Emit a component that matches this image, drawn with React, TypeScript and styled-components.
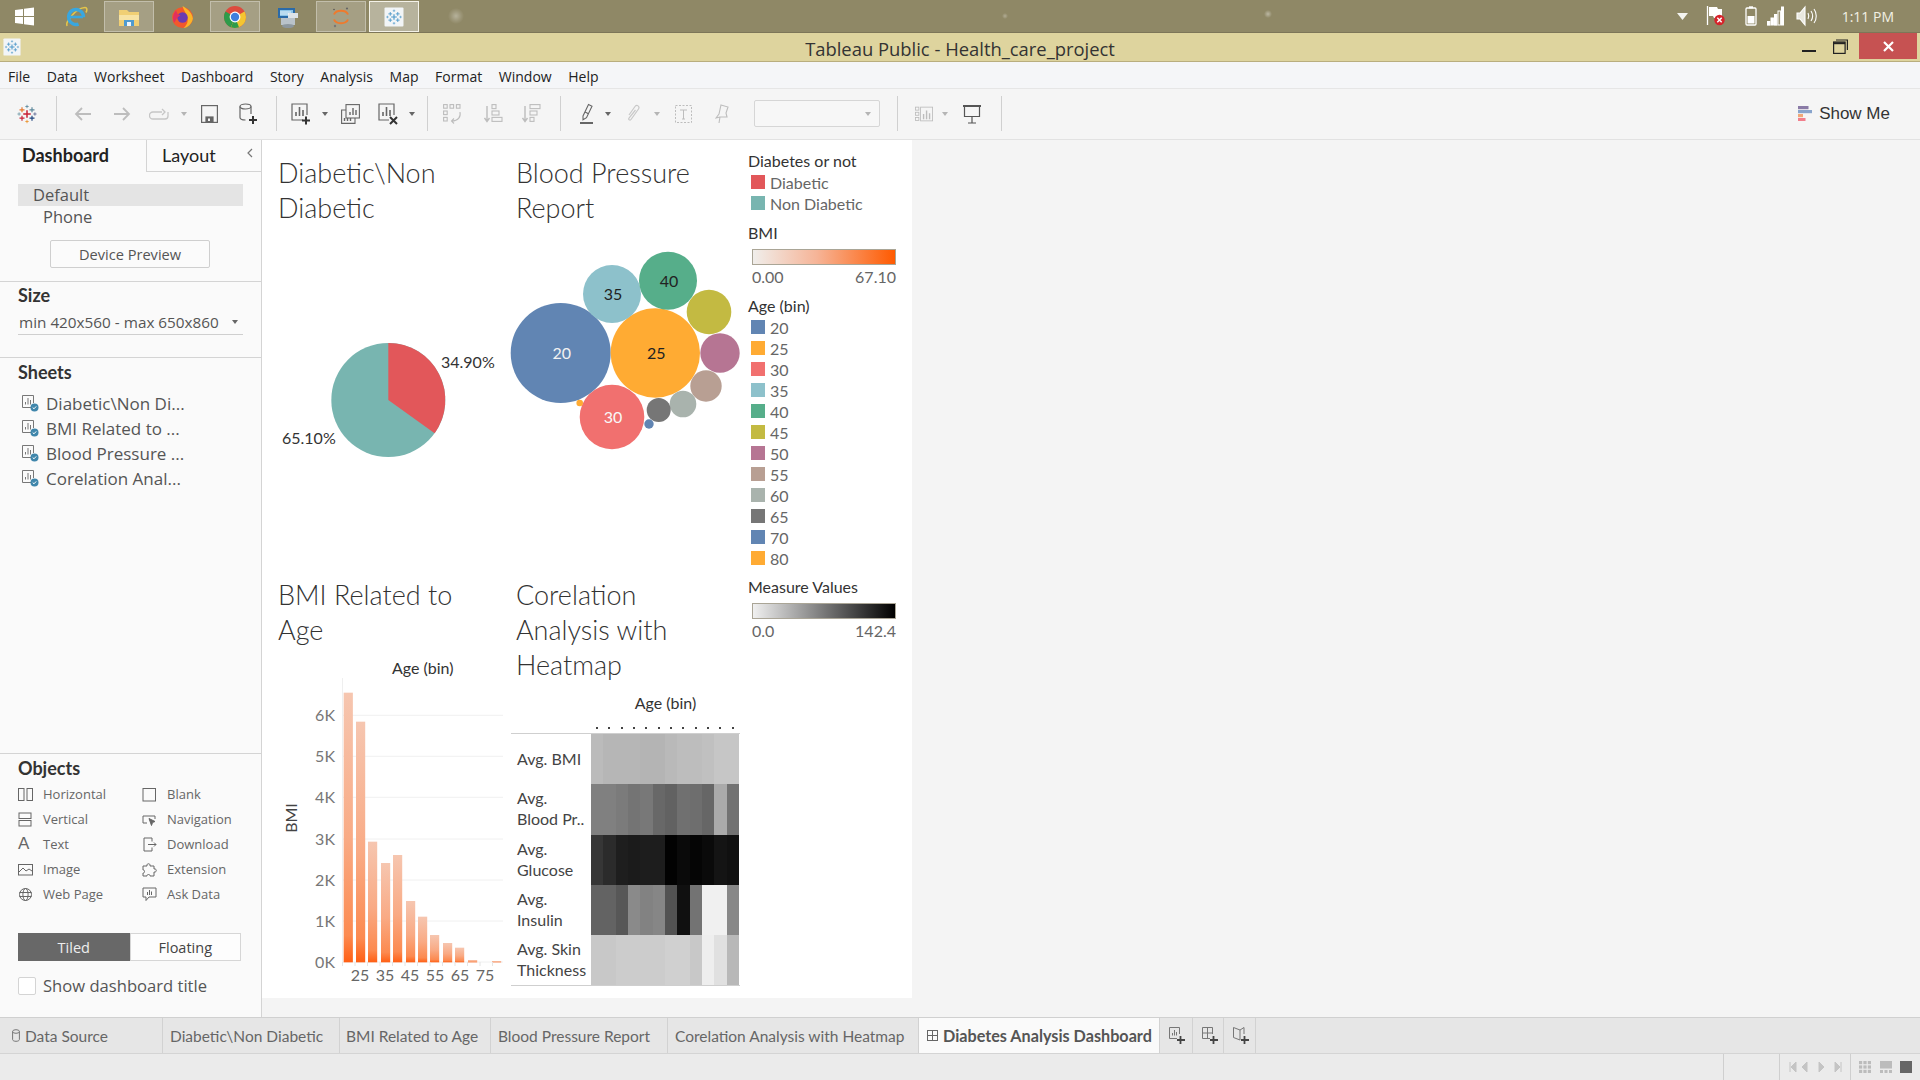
import React from 'react'
import styled, { createGlobalStyle } from 'styled-components'

const UI = `"Open Sans", "Noto Sans", sans-serif`
const BOOK = `Lato, "Open Sans", sans-serif`

const GlobalStyle = createGlobalStyle`
  html, body { margin: 0; padding: 0; background: #f4f4f4; }
  #root { width: 1920px; height: 1080px; }
  * { box-sizing: border-box; }
`

const Page = styled.div`
  width: 1920px;
  height: 1080px;
  display: flex;
  flex-direction: column;
  overflow: hidden;
  font-family: ${UI};
  background: #f4f4f4;
`

/* ---------- taskbar ---------- */

const Taskbar = styled.div`
  height: 33px;
  flex: none;
  display: flex;
  align-items: stretch;
  gap: 3px;
  background:
    radial-gradient(circle at 456px 16px, rgba(255,255,255,.35) 0, rgba(255,255,255,.12) 5px, transparent 8px),
    radial-gradient(circle at 1005px 16px, rgba(255,255,255,.3) 0, transparent 3px),
    radial-gradient(circle at 1268px 14px, rgba(255,255,255,.4) 0, transparent 4px),
    #8f8866;
  border-bottom: 1px solid #7d7658;
`

const TaskSlot = styled.div<{ $state?: 'open' | 'focus'; $w?: number }>`
  width: ${p => p.$w || 50}px;
  display: flex;
  align-items: center;
  justify-content: center;
  margin-top: 1px;
  border: 1px solid ${p => (p.$state === 'focus' ? '#f4f2e8' : p.$state === 'open' ? 'rgba(255,255,255,.32)' : 'transparent')};
  background: ${p => (p.$state === 'focus' ? 'rgba(255,255,255,.36)' : p.$state === 'open' ? 'rgba(255,255,255,.2)' : 'transparent')};
`

const Tray = styled.div`
  margin-left: auto;
  display: flex;
  align-items: center;
  padding-right: 26px;
`

const TraySlot = styled.div<{ $w: number }>`
  width: ${p => p.$w}px;
  display: flex;
  justify-content: center;
`

const Clock = styled.div`
  margin-left: 17px;
  font-size: 14px;
  color: #f2f0e4;
  white-space: nowrap;
`

/* ---------- title bar ---------- */

const TitleBar = styled.div`
  height: 29px;
  flex: none;
  position: relative;
  display: flex;
  align-items: center;
  justify-content: center;
  padding-top: 3px;
  background: #ded49e;
  border-bottom: 1px solid #b9ae7e;
  font-size: 18.4px;
  color: #333;
`

const AppIcon = styled.div`
  position: absolute;
  left: 3px;
  top: 5px;
  line-height: 0;
`

const WinControls = styled.div`
  position: absolute;
  right: 3px;
  top: 0;
  height: 26px;
  display: flex;
`

const WinBtn = styled.div<{ $w: number; $close?: boolean }>`
  width: ${p => p.$w}px;
  display: flex;
  align-items: center;
  justify-content: center;
  background: ${p => (p.$close ? '#c65252' : 'transparent')};
`

/* ---------- menu + toolbar ---------- */

const MenuBar = styled.div`
  height: 27px;
  flex: none;
  display: flex;
  align-items: center;
  gap: 16.6px;
  padding: 2px 0 0 8px;
  background: #f5f6f8;
  border-bottom: 1px solid #e6e6e6;
  font-size: 14px;
  color: #222;
`

const Toolbar = styled.div`
  height: 51px;
  flex: none;
  display: flex;
  align-items: center;
  padding: 0 0 1px 6px;
  background: #f5f5f5;
  border-bottom: 1px solid #e2e2e2;
`

const ToolSlot = styled.div<{ $w: number }>`
  width: ${p => p.$w}px;
  flex: none;
  display: flex;
  align-items: center;
  justify-content: center;
`

const ToolSep = styled.div`
  width: 1px;
  height: 35px;
  background: #d0d0d0;
`

const Caret = styled.div<{ $light?: boolean }>`
  width: 0;
  height: 0;
  border-left: 3.5px solid transparent;
  border-right: 3.5px solid transparent;
  border-top: 4px solid ${p => (p.$light ? '#b5b5b5' : '#666')};
`

const DisabledSelect = styled.div`
  width: 126px;
  height: 27px;
  margin-left: 14px;
  flex: none;
  display: flex;
  align-items: center;
  justify-content: flex-end;
  padding-right: 8px;
  border: 1px solid #d6d6d6;
  border-radius: 2px;
  background: #f7f7f7;
`

const ShowMe = styled.div`
  margin-left: auto;
  margin-right: 30px;
  display: flex;
  align-items: center;
  gap: 7px;
  font-family: "Liberation Sans", sans-serif;
  font-size: 17px;
  color: #333;
`

/* ---------- workspace ---------- */

const Workspace = styled.div`
  flex: 1;
  min-height: 0;
  display: flex;
`

const Side = styled.div`
  width: 262px;
  flex: none;
  display: flex;
  flex-direction: column;
  background: #fafafa;
  border-right: 1px solid #d4d4d4;
  color: #444;
`

const SideTabs = styled.div`
  height: 32px;
  flex: none;
  display: flex;
`

const SideTab = styled.div<{ $active?: boolean }>`
  width: ${p => (p.$active ? 146 : 115)}px;
  padding-left: ${p => (p.$active ? 22 : 15)}px;
  padding-bottom: 2px;
  position: relative;
  display: flex;
  align-items: center;
  font-family: ${BOOK};
  font-size: 18px;
  font-weight: ${p => (p.$active ? 700 : 400)};
  color: #222;
  border-left: ${p => (p.$active ? 'none' : '1px solid #d4d4d4')};
  border-bottom: ${p => (p.$active ? 'none' : '1px solid #d4d4d4')};
`

const Collapse = styled.span`
  position: absolute;
  right: 7px;
  top: 7px;
  line-height: 0;
`

const Section = styled.div<{ $h: number; $top: number }>`
  height: ${p => p.$h}px;
  flex: none;
  padding: ${p => p.$top}px 18px 0;
  border-bottom: 1px solid #d4d4d4;
`

const DeviceRow = styled.div<{ $selected?: boolean; $indent: number }>`
  height: 22px;
  display: flex;
  align-items: center;
  padding-left: ${p => p.$indent}px;
  padding-bottom: 2px;
  background: ${p => (p.$selected ? '#e4e4e4' : 'transparent')};
  font-size: 16.5px;
  color: #555;
`

const Btn = styled.div`
  width: 160px;
  height: 28px;
  margin: 12px 0 0 32px;
  display: flex;
  align-items: center;
  justify-content: center;
  background: #fbfbfb;
  border: 1px solid #cfcfcf;
  border-radius: 2px;
  font-size: 14.6px;
  color: #555;
`

const SideHeading = styled.div`
  height: 22px;
  display: flex;
  align-items: center;
  font-family: ${BOOK};
  font-size: 18px;
  font-weight: 700;
  color: #333;
`

const SizeSelect = styled.div`
  height: 24px;
  margin-top: 5px;
  display: flex;
  align-items: center;
  justify-content: space-between;
  padding: 0 5px 2px 1px;
  border-bottom: 1px solid #cfcfcf;
  font-size: 15.3px;
  color: #555;
  white-space: nowrap;
`

const SheetList = styled.div`
  flex: 1;
  padding-left: 22px;
  border-bottom: 1px solid #d4d4d4;
  display: flex;
  flex-direction: column;
`

const SheetsHeading = styled(SideHeading)`
  margin: 3px 0 8px -4px;
`

const SheetRow = styled.div`
  height: 25px;
  display: flex;
  align-items: center;
  gap: 7px;
  font-size: 17px;
  color: #555;
  white-space: nowrap;
`

const ObjectsPanel = styled.div`
  height: 263px;
  flex: none;
  padding: 3px 0 0 18px;
`

const ObjectGrid = styled.div`
  display: grid;
  grid-template-columns: 124px 1fr;
  grid-auto-rows: 25px;
  margin-top: 2.5px;
`

const ObjectItem = styled.div`
  display: flex;
  align-items: center;
  font-size: 13px;
  color: #666;
`

const ObjectIcon = styled.span`
  width: 25px;
  flex: none;
  display: flex;
  align-items: center;
`

const LetterIcon = styled.span`
  font-family: "Liberation Sans", sans-serif;
  font-size: 17px;
  color: #666;
`

const Toggle = styled.div`
  width: 223px;
  height: 28px;
  margin-top: 26.5px;
  display: flex;
`

const ToggleBtn = styled.div<{ $on?: boolean }>`
  flex: 1;
  display: flex;
  align-items: center;
  justify-content: center;
  font-size: 14.5px;
  color: ${p => (p.$on ? '#eee' : '#444')};
  background: ${p => (p.$on ? '#686868' : '#fdfdfd')};
  border: 1px solid ${p => (p.$on ? '#686868' : '#d6d6d6')};
`

const CheckRow = styled.div`
  margin-top: 13px;
  display: flex;
  align-items: center;
  gap: 7px;
  font-size: 16.6px;
  color: #555;
`

const CheckBox = styled.div`
  width: 18px;
  height: 18px;
  background: #fff;
  border: 1px solid #d4d4d4;
  border-radius: 2px;
`

/* ---------- dashboard ---------- */

const Canvas = styled.div`
  flex: 1;
  background: #f4f4f4;
`

const Dashboard = styled.div`
  width: 650px;
  height: 858px;
  display: grid;
  grid-template-columns: 249px 229px 172px;
  grid-template-rows: 422px 436px;
  background: #fff;
  font-family: ${BOOK};
`

const Sheet = styled.div<{ $pad: number }>`
  display: flex;
  flex-direction: column;
  min-width: 0;
  & > h2 { padding-left: ${p => p.$pad}px; }
`

const SheetTitle = styled.h2`
  margin: 0;
  padding-top: 15px;
  padding-bottom: 1px;
  font-family: ${BOOK};
  font-size: 27px;
  font-weight: 300;
  line-height: 35px;
  color: #333;
  white-space: nowrap;
`

const ChartSvg = styled.svg`
  display: block;
  overflow: visible;
  flex: none;
  font-family: ${BOOK};
`

const Legends = styled.div`
  grid-column: 3;
  grid-row: 1 / 3;
  padding: 10.5px 0 0 8px;
  display: flex;
  flex-direction: column;
`

const LegendHeading = styled.div<{ $gap?: number }>`
  height: 21px;
  margin-top: ${p => p.$gap || 0}px;
  padding-bottom: 2px;
  display: flex;
  align-items: center;
  font-size: 16px;
  color: #333;
`

const LegendRow = styled.div`
  height: 21px;
  display: flex;
  align-items: center;
  gap: 5px;
  padding-left: 3px;
  font-size: 16px;
  color: #666;
`

const Swatch = styled.div<{ $c: string }>`
  width: 14px;
  height: 14px;
  background: ${p => p.$c};
`

const Ramp = styled.div<{ $colors: string }>`
  width: 144px;
  height: 16px;
  margin: 5px 0 0 4px;
  border: 1px solid #aaa596;
  background: linear-gradient(to right, ${p => p.$colors});
`

const RampLabels = styled.div`
  width: 144px;
  height: 21px;
  margin: 1px 0 0 4px;
  display: flex;
  align-items: center;
  justify-content: space-between;
  font-size: 16px;
  color: #666;
`

const HeatAxis = styled.div`
  height: 40px;
  padding: 0 0 2px 80px;
  display: flex;
  align-items: center;
  justify-content: center;
  font-size: 16px;
  color: #333;
`

const HeatDots = styled.div`
  height: 10px;
  padding-left: 80px;
  display: flex;
`

const HeatDot = styled.div`
  width: 12.33px;
  display: flex;
  align-items: center;
  justify-content: center;
  &::after {
    content: "";
    width: 2px;
    height: 2px;
    background: #444;
  }
`

const HeatTable = styled.div`
  border-top: 1px solid #cfcfcf;
  border-bottom: 1px solid #cfcfcf;
  display: flex;
  flex-direction: column;
`

const HeatRow = styled.div`
  height: 50.3px;
  display: flex;
`

const HeatLabel = styled.div`
  width: 80px;
  flex: none;
  padding: 0 0 2px 6px;
  display: flex;
  align-items: center;
  font-size: 16px;
  line-height: 21px;
  color: #444;
  white-space: nowrap;
`

const HeatCell = styled.div<{ $v: number }>`
  width: 12.33px;
  flex: none;
  background: rgb(${p => p.$v}, ${p => p.$v}, ${p => p.$v});
`

/* ---------- tabs + status ---------- */

const TabBar = styled.div`
  height: 37px;
  flex: none;
  display: flex;
  background: #e6e6e6;
  border-top: 1px solid #d0d0d0;
  border-bottom: 1px solid #d4d4d4;
  font-family: ${BOOK};
  font-size: 15.5px;
  color: #666;
`

const SheetTab = styled.div<{ $w: number; $active?: boolean; $pad?: number }>`
  width: ${p => p.$w}px;
  flex: none;
  display: flex;
  align-items: center;
  gap: 5px;
  padding-left: ${p => p.$pad ?? 8}px;
  border-right: 1px solid #d2d2d2;
  white-space: nowrap;
  background: ${p => (p.$active ? '#fafafa' : 'transparent')};
  font-weight: ${p => (p.$active ? 700 : 400)};
  font-size: ${p => (p.$active ? 16.2 : 15.5)}px;
  color: ${p => (p.$active ? '#555' : '#666')};
`

const StatusBar = styled.div`
  height: 26px;
  flex: none;
  display: flex;
  justify-content: flex-end;
  background: #ebebeb;
`

const StatusCell = styled.div<{ $w: number }>`
  width: ${p => p.$w}px;
  display: flex;
  align-items: center;
  justify-content: space-evenly;
  border-left: 1px solid #cfcfcf;
`

/* ---------- drawings ---------- */

const Cross = ({ x, y, s, c, w = 1.4 }: { x: number; y: number; s: number; c: string; w?: number }) => (
  <path d={`M${x - s} ${y}H${x + s}M${x} ${y - s}V${y + s}`} stroke={c} strokeWidth={w} fill="none" />
)

const TableauMark = ({ size }: { size: number }) => (
  <svg width={size} height={size} viewBox="0 0 24 24">
    <Cross x={12} y={12} s={4.5} c="#c72035" w={1.8} />
    <Cross x={6} y={7} s={3} c="#e8762c" />
    <Cross x={18} y={7} s={3} c="#5b879b" />
    <Cross x={6} y={17} s={3} c="#c72035" />
    <Cross x={18} y={17} s={3} c="#1f447e" />
    <Cross x={12} y={3} s={2} c="#59879b" w={1} />
    <Cross x={12} y={21} s={2} c="#eb9129" w={1} />
    <Cross x={2.5} y={12} s={2} c="#7099a6" w={1} />
    <Cross x={21.5} y={12} s={2} c="#5c6692" w={1} />
  </svg>
)

const TableauTile = ({ size }: { size: number }) => (
  <svg width={size} height={size} viewBox="0 0 20 20">
    <rect x="0.5" y="0.5" width="19" height="19" rx="1" fill="#f2f5f7" />
    <g transform="translate(2.5 2.5) scale(.625)">
      <Cross x={12} y={12} s={4.5} c="#4b97c9" w={1.8} />
      <Cross x={6} y={7} s={3} c="#4b97c9" />
      <Cross x={18} y={7} s={3} c="#4b97c9" />
      <Cross x={6} y={17} s={3} c="#4b97c9" />
      <Cross x={18} y={17} s={3} c="#4b97c9" />
      <Cross x={12} y={2} s={2} c="#4b97c9" w={1} />
      <Cross x={12} y={22} s={2} c="#4b97c9" w={1} />
      <Cross x={1.5} y={12} s={2} c="#4b97c9" w={1} />
      <Cross x={22.5} y={12} s={2} c="#4b97c9" w={1} />
    </g>
  </svg>
)

const WindowsLogo = () => (
  <svg width="19" height="19" viewBox="0 0 19 19" fill="#fff">
    <path d="M0 3 8 1.9V9H0zM9 1.8 19 .4V9H9zM0 10h8v7.1L0 16zM9 10h10v8.6L9 17.2z" />
  </svg>
)

const IEIcon = () => (
  <svg width="24" height="24" viewBox="0 0 24 24" fill="none">
    <path d="M3 21C1 17 12 3 21 2.5c2-.1 2.5 2.5 1 5" stroke="#e5c64a" strokeWidth="1.6" />
    <circle cx="12" cy="12" r="7.5" stroke="#39a7e0" strokeWidth="3.4" strokeDasharray="38 9.1" transform="rotate(70 12 12)" />
    <path d="M6 12h13" stroke="#39a7e0" strokeWidth="2.6" />
  </svg>
)

const FolderIcon = () => (
  <svg width="24" height="24" viewBox="0 0 24 24">
    <path d="M2 5h8l2 2h10v14H2z" fill="#f0cf74" />
    <rect x="2" y="10" width="20" height="5" fill="#f7e3a4" />
    <rect x="7" y="15" width="10" height="6" fill="#4f9bd0" />
    <rect x="10" y="17" width="4" height="4" fill="#eef4f8" />
  </svg>
)

const FirefoxIcon = () => (
  <svg width="25" height="25" viewBox="0 0 24 24">
    <circle cx="12" cy="13" r="10" fill="#f2582c" />
    <path d="M12 2c3 2 9 5 10 12-1 5-5 9-9 9 4-3 5-8 3-12-1-3-3-5-4-9z" fill="#fbb428" />
    <circle cx="12" cy="13" r="5" fill="#6c3bb3" />
    <path d="M4 18c-2-4-1-9 2-12 0 3 2 4 4 5-3 1-4 4-6 7z" fill="#e32f5e" />
  </svg>
)

const ChromeIcon = () => (
  <svg width="24" height="24" viewBox="0 0 24 24">
    <circle cx="12" cy="12" r="11" fill="#dd4b3e" />
    <path d="M12 12 2.5 6.5A11 11 0 0 0 8 22.3z" fill="#2e9b4a" />
    <path d="M12 12 8 22.3A11 11 0 0 0 23 12 11 11 0 0 0 21.5 6.5z" fill="#f4c531" />
    <path d="M12 12 8 22.3A11 11 0 0 0 16 22.2z" fill="#2e9b4a" />
    <circle cx="12" cy="12" r="5.4" fill="#fff" />
    <circle cx="12" cy="12" r="4.2" fill="#3f7fde" />
  </svg>
)

const NetworkIcon = () => (
  <svg width="24" height="24" viewBox="0 0 24 24">
    <rect x="5" y="12" width="14" height="8" fill="#b9c2c9" />
    <ellipse cx="12" cy="21" rx="6" ry="2" fill="#8d979e" />
    <rect x="2" y="3" width="17" height="10" fill="#2a6aa8" />
    <rect x="4" y="5" width="13" height="6" fill="#8cc3e6" />
    <rect x="12" y="8" width="10" height="5" fill="#dde3e8" />
    <path d="M4 7h11M4 9h9" stroke="#fff" strokeWidth=".8" />
  </svg>
)

const JupyterIcon = () => (
  <svg width="24" height="24" viewBox="0 0 24 24" fill="none">
    <path d="M5 9.5C7 4.5 17 4.5 19 9.5" stroke="#ef7a2d" strokeWidth="2" />
    <path d="M5 14.5c2 5 12 5 14 0" stroke="#ef7a2d" strokeWidth="2" />
    <circle cx="18" cy="3.5" r="1.1" fill="#666" />
    <circle cx="5" cy="4.5" r=".8" fill="#555" />
    <circle cx="6" cy="21" r="1.2" fill="#777" />
  </svg>
)

const TrayFlag = () => (
  <svg width="20" height="22" viewBox="0 0 20 22">
    <path d="M1.5 1v19" stroke="#fff" strokeWidth="1.3" />
    <path d="M3 2h8l1 2h4v9H8l-1-2H3z" fill="#fff" />
    <circle cx="13.5" cy="15" r="5.2" fill="#d6232a" />
    <path d="M11.3 12.8l4.4 4.4M15.7 12.8l-4.4 4.4" stroke="#fff" strokeWidth="1.5" />
  </svg>
)

const TrayBattery = () => (
  <svg width="12" height="20" viewBox="0 0 12 20" fill="none">
    <rect x="1" y="2" width="10" height="17" rx="1" stroke="#fff" strokeWidth="1.3" />
    <rect x="4" y=".3" width="4" height="2" fill="#fff" />
    <rect x="2.5" y="10" width="7" height="7.5" fill="#fff" />
  </svg>
)

const TraySignal = () => (
  <svg width="17" height="20" viewBox="0 0 17 20" fill="none" stroke="#fff" strokeWidth="1">
    <rect x=".5" y="15.5" width="2.4" height="3.6" fill="#fff" />
    <rect x="4" y="12" width="2.4" height="7" fill="#fff" />
    <rect x="7.5" y="8.5" width="2.4" height="10.6" fill="#fff" />
    <rect x="11" y="5" width="2.4" height="14" />
    <rect x="14.5" y="1" width="2" height="18" fill="#fff" />
  </svg>
)

const TraySpeaker = () => (
  <svg width="22" height="22" viewBox="0 0 22 22" fill="none" stroke="#fff" strokeWidth="1.1">
    <path d="M1 8h3l5-6v18l-5-6H1z" fill="#e9e8df" />
    <path d="M12 8c1 2 1 4 0 6M15 6c2 3 2 7 0 10M18 4c3 4 3 10 0 14" />
  </svg>
)

type Tone = { c: string }

const Line = styled.svg`
  display: block;
`

const IconBack = ({ c }: Tone) => (
  <Line width="18" height="16" viewBox="0 0 18 16" fill="none" stroke={c} strokeWidth="1.8">
    <path d="M17 8H2M8 2 2 8l6 6" />
  </Line>
)
const IconForward = ({ c }: Tone) => (
  <Line width="18" height="16" viewBox="0 0 18 16" fill="none" stroke={c} strokeWidth="1.8">
    <path d="M1 8h15M10 2l6 6-6 6" />
  </Line>
)
const IconRedo = ({ c }: Tone) => (
  <Line width="20" height="14" viewBox="0 0 20 14" fill="none" stroke={c} strokeWidth="1.3">
    <path d="M13 5H4a3 3 0 0 0 0 7h12a3 3 0 0 0 3-3V5" />
    <path d="M13 2l3 3-3 3" />
  </Line>
)
const IconSave = () => (
  <Line width="17" height="18" viewBox="0 0 17 18" fill="none" stroke="#666" strokeWidth="1.2">
    <rect x=".6" y=".6" width="15.8" height="16.8" />
    <rect x="5" y="12" width="7" height="5.4" fill="#666" />
    <rect x="7" y="13.5" width="2" height="2.5" fill="#f5f5f5" stroke="none" />
  </Line>
)
const IconAddData = () => (
  <Line width="18" height="22" viewBox="0 0 18 22" fill="none" stroke="#666" strokeWidth="1.2">
    <ellipse cx="6.5" cy="3.5" rx="5.5" ry="2.5" />
    <path d="M1 3.5v11c0 1.4 2.4 2.5 5.5 2.5M12 3.5V11" />
    <path d="M14 13v8M10 17h8" stroke="#333" strokeWidth="2" />
  </Line>
)
const IconNewSheet = () => (
  <Line width="20" height="22" viewBox="0 0 20 22" fill="none" stroke="#666" strokeWidth="1.2">
    <path d="M12 17H1V1h15v11" />
    <path d="M5 13V9M8.5 13V4M12 13V7" strokeWidth="1.6" />
    <path d="M15 13.5v8M11 17.5h8" stroke="#333" strokeWidth="2" />
  </Line>
)
const IconDup = () => (
  <Line width="19" height="20" viewBox="0 0 19 20" fill="none" stroke="#666" strokeWidth="1.1">
    <rect x="5" y=".6" width="13.4" height="13.4" fill="#f5f5f5" />
    <path d="M9 11V8M12 11V4M15 11V6" strokeWidth="1.4" />
    <path d="M5 6H.6v13.4H14V14" />
    <path d="M3.5 17v-3M6.5 17v-3M9.5 17v-3" strokeWidth="1.4" />
  </Line>
)
const IconClear = () => (
  <Line width="20" height="22" viewBox="0 0 20 22" fill="none" stroke="#666" strokeWidth="1.2">
    <path d="M11 17H1V1h15v11" />
    <path d="M5 13V9M8.5 13V4M12 13V7" strokeWidth="1.6" />
    <path d="M12 14l7 7M19 14l-7 7" stroke="#333" strokeWidth="2" />
  </Line>
)
const IconSwap = () => (
  <Line width="20" height="20" viewBox="0 0 20 20" fill="none" stroke="#bdbdbd" strokeWidth="1.1">
    <rect x=".6" y=".6" width="3.6" height="3.6" />
    <rect x="7" y=".6" width="3.6" height="3.6" />
    <rect x="13.4" y=".6" width="3.6" height="3.6" />
    <rect x=".6" y="7" width="3.6" height="3.6" />
    <rect x=".6" y="13.4" width="3.6" height="3.6" />
    <path d="M17 8c1 5-2 9-8 9M11 14.5 8.5 17l2.5 2.5" />
  </Line>
)
const IconSort = ({ flip }: { flip?: boolean }) => (
  <Line width="19" height="20" viewBox="0 0 19 20" fill="none" stroke="#bdbdbd" strokeWidth="1.1">
    <path d="M3 2v15M.5 14 3 17.5 5.5 14" strokeWidth="1.4" />
    {flip ? (
      <>
        <rect x="8" y=".6" width="10" height="4" />
        <rect x="8" y="7" width="7" height="4" />
        <rect x="8" y="13.4" width="4" height="4" />
      </>
    ) : (
      <>
        <rect x="8" y=".6" width="4" height="4" />
        <rect x="8" y="7" width="7" height="4" />
        <rect x="8" y="13.4" width="10" height="4" />
      </>
    )}
  </Line>
)
const IconHighlight = () => (
  <Line width="14" height="22" viewBox="0 0 14 22" fill="none" stroke="#666" strokeWidth="1.1">
    <path d="M3 13 8.5 1.5l3.5 1.7-5.5 11.5-3.5 2z" />
    <path d="M5 9l3.5 1.7" />
    <rect x="0" y="19" width="13" height="2" fill="#666" stroke="none" />
  </Line>
)
const IconClip = () => (
  <Line width="14" height="20" viewBox="0 0 14 20" fill="none" stroke="#c8c8c8" strokeWidth="1.2">
    <path d="M3 11 9 2.5c2-2.5 5 0 3.5 2.5L5 15.5c-1 1.5-3 0-2-1.5L9.5 6" />
  </Line>
)
const IconTextBox = () => (
  <Line width="18" height="20" viewBox="0 0 18 20" fill="none" stroke="#bdbdbd" strokeWidth="1">
    <rect x=".5" y="1.5" width="16" height="17" strokeDasharray="2 1.5" />
    <path d="M5 6h7M8.5 6v9M7 15h3" />
  </Line>
)
const IconPin = () => (
  <Line width="14" height="20" viewBox="0 0 14 20" fill="none" stroke="#bdbdbd" strokeWidth="1.1">
    <path d="M6 1l7 2-2 6 1 4H5l-4 1 3-4zM5 13l-1 6" />
  </Line>
)
const IconShowCards = () => (
  <Line width="21" height="18" viewBox="0 0 21 18" fill="none" stroke="#bdbdbd" strokeWidth="1">
    <rect x=".5" y="1" width="4" height="3.5" />
    <rect x="6.5" y="1" width="14" height="16" />
    <rect x=".5" y="7" width="4" height="3.5" />
    <rect x=".5" y="13" width="4" height="3.5" />
    <path d="M10 15V9M13.5 15V5M17 15V8" strokeWidth="1.6" />
  </Line>
)
const IconPresent = () => (
  <Line width="18" height="20" viewBox="0 0 18 20" fill="none" stroke="#555" strokeWidth="1.2">
    <path d="M1.5 2.5v10h15v-10M9 12.5V19M5 19h8" />
    <rect x="0" y="1" width="18" height="2" fill="#555" stroke="none" />
  </Line>
)

const ShowMeIcon = () => (
  <Line width="14" height="15" viewBox="0 0 14 15">
    <rect x="0" y="0" width="10.5" height="3.2" fill="#8a7ba6" />
    <rect x="0" y="4" width="14" height="3.2" fill="#88a4cc" />
    <rect x="0" y="8" width="5" height="3.2" fill="#f0a878" />
    <rect x="0" y="12" width="7.5" height="3.2" fill="#f27f8c" />
  </Line>
)

const SheetIcon = () => (
  <Line width="17" height="17" viewBox="0 0 17 17" fill="none" stroke="#777" strokeWidth="1">
    <path d="M10 12.5H.5V.5h11V8" />
    <path d="M3.5 9.5V7M6 9.5V3M8.5 9.5V5" />
    <circle cx="12.5" cy="12.5" r="4" fill="#3f86ab" stroke="none" />
    <path d="M10.7 12.5l1.3 1.3 2.2-2.4" stroke="#fff" />
  </Line>
)

const obj = { width: 15, height: 15, viewBox: '0 0 15 15', fill: 'none', stroke: '#666', strokeWidth: 1 }
const objectIcons: Record<string, React.ReactNode> = {
  Horizontal: <Line {...obj}><rect x=".5" y="1.5" width="5.5" height="12" /><rect x="9" y="1.5" width="5.5" height="12" /></Line>,
  Vertical: <Line {...obj}><rect x="1" y="1" width="12" height="5.5" /><rect x="1" y="8.5" width="12" height="5.5" /></Line>,
  Text: <LetterIcon>A</LetterIcon>,
  Image: <Line {...obj}><rect x=".5" y="2.5" width="14" height="10.5" /><path d="M1 10l4-4 3 3 3-2 3 2" /></Line>,
  'Web Page': <Line {...obj}><circle cx="7.5" cy="7.5" r="6" /><ellipse cx="7.5" cy="7.5" rx="2.6" ry="6" /><path d="M1.5 5.5h12M1.5 9.5h12" /></Line>,
  Blank: <Line {...obj}><rect x="1" y="1.5" width="12.5" height="12.5" /></Line>,
  Navigation: <Line {...obj}><path d="M5 11H1V4h12v3" /><path d="M7 6.5l6 3-2.5 1-1 3z" fill="#666" /></Line>,
  Download: <Line {...obj}><path d="M10 4.5V1H2v13h8v-3.5" /><path d="M6 7.5h8M12 5.5l2 2-2 2" /></Line>,
  Extension: <Line {...obj}><path d="M1 4h4c-1-3 4-3 3 0h4v3c3-1 3 4 0 3v4H8c.5-2-3.5-2-3 0H1v-3c2 .5 2-3.5 0-3z" /></Line>,
  'Ask Data': <Line {...obj}><path d="M1 1h13v9H7l-3 3.5V10H1z" /><path d="M5.5 8V5M7.5 8V3M9.5 8V4.5" /></Line>,
}

const SmallAdd = ({ kind }: { kind: 'sheet' | 'dash' | 'story' }) => (
  <Line width="16" height="17" viewBox="0 0 16 17" fill="none" stroke="#777" strokeWidth="1">
    {kind === 'sheet' && <><path d="M8 11.5H.5V.5h10V7" /><path d="M3.5 8.5V6M5.5 8.5V3M7.5 8.5V5" /></>}
    {kind === 'dash' && <><path d="M8 11.5H.5V.5h10V7" /><path d="M.5 6h10M5.5.5v11" /></>}
    {kind === 'story' && <path d="M7 13 .5 10.5V.5L7 3l4-2.5V7M7 3v10" />}
    <path d="M11.5 9v8M8 13h8" stroke="#444" strokeWidth="1.8" />
  </Line>
)

/* ---------- data ---------- */

const toolSlots: [number, React.ReactNode][] = [
  [42, <TableauMark size={20} />],
  [16, <ToolSep />],
  [38, <IconBack c="#bdbdbd" />],
  [40, <IconForward c="#bdbdbd" />],
  [34, <IconRedo c="#c6c6c6" />],
  [16, <Caret $light />],
  [34, <IconSave />],
  [44, <IconAddData />],
  [12, <ToolSep />],
  [38, <IconNewSheet />],
  [10, <Caret />],
  [40, <IconDup />],
  [36, <IconClear />],
  [12, <Caret />],
  [18, <ToolSep />],
  [34, <IconSwap />],
  [46, <IconSort />],
  [30, <IconSort flip />],
  [28, <ToolSep />],
  [26, <IconHighlight />],
  [16, <Caret />],
  [34, <IconClip />],
  [14, <Caret $light />],
  [40, <IconTextBox />],
  [36, <IconPin />],
]

const toolSlotsAfter: [number, React.ReactNode][] = [
  [35, <ToolSep />],
  [18, <IconShowCards />],
  [24, <Caret $light />],
  [30, <IconPresent />],
  [28, <ToolSep />],
]

const menus = ['File', 'Data', 'Worksheet', 'Dashboard', 'Story', 'Analysis', 'Map', 'Format', 'Window', 'Help']
const sheets = ['Diabetic\\Non Di...', 'BMI Related to ...', 'Blood Pressure ...', 'Corelation Anal...']
const objects = ['Horizontal', 'Blank', 'Vertical', 'Navigation', 'Text', 'Download', 'Image', 'Extension', 'Web Page', 'Ask Data']

const ageLegend: [string, string][] = [
  ['20', '#6185b3'], ['25', '#ffab33'], ['30', '#f1706f'], ['35', '#8dc1cb'],
  ['40', '#56ae8a'], ['45', '#c3ba42'], ['50', '#b67593'], ['55', '#b89f93'],
  ['60', '#a9b3ad'], ['65', '#767676'], ['70', '#6185b3'], ['80', '#ffab33'],
]

const bubbles: { cx: number; cy: number; r: number; c: string; label?: string; text?: string }[] = [
  { cx: 560.7, cy: 353, r: 50, c: '#6185b3', label: '20', text: '#f2f2f2' },
  { cx: 655.3, cy: 353, r: 44.7, c: '#ffab33', label: '25', text: '#222' },
  { cx: 612, cy: 417, r: 32.3, c: '#f1706f', label: '30', text: '#f8f8f8' },
  { cx: 612, cy: 294, r: 29, c: '#8dc1cb', label: '35', text: '#222' },
  { cx: 668, cy: 280.7, r: 29, c: '#56ae8a', label: '40', text: '#222' },
  { cx: 709, cy: 312, r: 22.3, c: '#c3ba42' },
  { cx: 720, cy: 353, r: 19.7, c: '#b67593' },
  { cx: 706, cy: 386, r: 15.7, c: '#b89f93' },
  { cx: 683, cy: 404, r: 13.3, c: '#a9b3ad' },
  { cx: 658.7, cy: 410, r: 12, c: '#767676' },
  { cx: 649, cy: 424, r: 4.7, c: '#6185b3' },
  { cx: 579.7, cy: 403, r: 3.3, c: '#ffab33' },
]

const gridY = [715.3, 756.3, 797.3, 839, 880, 921, 962]
const barX = [221, 258, 294, 333, 369, 408, 444, 480, 519, 555, 594, 666]
const barTop = [368, 455, 815, 879, 855, 993, 1040, 1095, 1119, 1133, 1170, 1173]

const heatRows: { label: React.ReactNode; cells: number[] }[] = [
  { label: 'Avg. BMI', cells: [0xbb, 0xb6, 0xb6, 0xb6, 0xb4, 0xb4, 0xb9, 0xbd, 0xbd, 0xc0, 0xc6, 0xc6] },
  { label: <>Avg.<br />Blood Pr..</>, cells: [0x80, 0x80, 0x7b, 0x74, 0x78, 0x68, 0x62, 0x70, 0x6e, 0x66, 0xaa, 0x72] },
  { label: <>Avg.<br />Glucose</>, cells: [0x36, 0x2b, 0x1e, 0x1b, 0x1d, 0x1d, 0x02, 0x0a, 0x05, 0x0a, 0x14, 0x10] },
  { label: <>Avg.<br />Insulin</>, cells: [0x63, 0x63, 0x57, 0x8a, 0x82, 0x86, 0x52, 0x10, 0x73, 0xf0, 0xf0, 0x88] },
  { label: <>Avg. Skin<br />Thickness</>, cells: [0xc8, 0xc8, 0xcc, 0xcc, 0xcc, 0xcc, 0xd0, 0xd0, 0xc8, 0xee, 0xe0, 0xb8] },
]

const sliceEnd = (pct: number, cx: number, cy: number, r: number) => {
  const a = (pct / 100) * Math.PI * 2
  return [cx + r * Math.sin(a), cy - r * Math.cos(a)]
}

/* ---------- charts ---------- */

const PieChart = () => {
  const [ex, ey] = sliceEnd(34.9, 388.3, 400, 57)
  return (
    <ChartSvg width={249} height={344} viewBox="262 226 249 344">
      <circle cx={388.3} cy={400} r={57} fill="#78b5b0" />
      <path d={`M388.3 400V343A57 57 0 0 1 ${ex} ${ey}Z`} fill="#e2575a" />
      <text x={441} y={368} fontSize={16} fill="#333">34.90%</text>
      <text x={282} y={444} fontSize={16} fill="#333">65.10%</text>
    </ChartSvg>
  )
}

const BubbleChart = () => (
  <ChartSvg width={229} height={344} viewBox="511 226 229 344">
    {bubbles.map(b => (
      <g key={b.cx}>
        <circle cx={b.cx} cy={b.cy} r={b.r} fill={b.c} />
        {b.label && (
          <text x={b.cx + 1} y={b.cy + 6} fontSize={16} textAnchor="middle" fill={b.text}>{b.label}</text>
        )}
      </g>
    ))}
  </ChartSvg>
)

const BarChart = () => (
  <ChartSvg width={249} height={350} viewBox="262 648 249 350">
    <defs>
      <linearGradient id="barFill" x1="0" y1="0" x2="0" y2="1">
        <stop offset="0" stopColor="#f6c6b0" />
        <stop offset=".55" stopColor="#f9aa84" />
        <stop offset=".9" stopColor="#fc8a50" />
        <stop offset="1" stopColor="#ff5f14" />
      </linearGradient>
    </defs>
    <text x={422.7} y={674} fontSize={16} textAnchor="middle" fill="#333">Age (bin)</text>
    <text transform="translate(297 818) rotate(-90)" fontSize={16} textAnchor="middle" fill="#444">BMI</text>
    <path d="M342.5 678V962" stroke="#efefef" />
    {gridY.map((y, i) => (
      <g key={y}>
        <path d={`M342 ${y}H503`} stroke="#f0f0f0" />
        <text x={335} y={y + 5.5} fontSize={16} textAnchor="end" fill="#777">{`${6 - i}K`}</text>
      </g>
    ))}
    {barX.map((x, i) => (
      <rect
        key={x}
        x={270 + x / 3}
        y={570 + barTop[i] / 3}
        width={9.2}
        height={(1177 - barTop[i]) / 3}
        fill="url(#barFill)"
      />
    ))}
    {Array.from({ length: 13 }, (_, i) => (
      <path key={i} d={`M${342.5 + i * 12.5} 962v4`} stroke="#e4e4e4" />
    ))}
    {[25, 35, 45, 55, 65, 75].map((v, i) => (
      <text key={v} x={360 + i * 25} y={981} fontSize={16} textAnchor="middle" fill="#666">{v}</text>
    ))}
  </ChartSvg>
)

const Heatmap = () => (
  <>
    <HeatAxis>Age (bin)</HeatAxis>
    <HeatDots>
      {heatRows[0].cells.map((_, i) => <HeatDot key={i} />)}
    </HeatDots>
    <HeatTable>
      {heatRows.map((row, r) => (
        <HeatRow key={r}>
          <HeatLabel><div>{row.label}</div></HeatLabel>
          {row.cells.map((v, i) => <HeatCell key={i} $v={v} />)}
        </HeatRow>
      ))}
    </HeatTable>
  </>
)

const App: React.FC = () => (
  <Page>
    <GlobalStyle />
    <Taskbar>
      <TaskSlot $w={48}><WindowsLogo /></TaskSlot>
      <TaskSlot><IEIcon /></TaskSlot>
      <TaskSlot $state="open"><FolderIcon /></TaskSlot>
      <TaskSlot><FirefoxIcon /></TaskSlot>
      <TaskSlot $state="open"><ChromeIcon /></TaskSlot>
      <TaskSlot><NetworkIcon /></TaskSlot>
      <TaskSlot $state="open"><JupyterIcon /></TaskSlot>
      <TaskSlot $state="focus"><TableauTile size={20} /></TaskSlot>
      <Tray>
        <TraySlot $w={20}>
          <svg width="11" height="7" viewBox="0 0 11 7"><path d="M0 0h11L5.5 7z" fill="#f4f4f0" /></svg>
        </TraySlot>
        <TraySlot $w={46}><TrayFlag /></TraySlot>
        <TraySlot $w={24}><TrayBattery /></TraySlot>
        <TraySlot $w={26}><TraySignal /></TraySlot>
        <TraySlot $w={36}><TraySpeaker /></TraySlot>
        <Clock>1:11 PM</Clock>
      </Tray>
    </Taskbar>

    <TitleBar>
      <AppIcon><TableauTile size={18} /></AppIcon>
      Tableau Public - Health_care_project
      <WinControls>
        <WinBtn $w={27}>
          <svg width="14" height="14" viewBox="0 0 14 14"><rect x="0" y="11" width="14" height="2" fill="#222" /></svg>
        </WinBtn>
        <WinBtn $w={37}>
          <svg width="15" height="15" viewBox="0 0 15 15" fill="none" stroke="#222" strokeWidth="1.2">
            <rect x=".6" y="3" width="11.5" height="11.4" />
            <path d="M.6 4.2h11.5" strokeWidth="2" />
            <path d="M3 1h11.4v10" />
          </svg>
        </WinBtn>
        <WinBtn $w={58} $close>
          <svg width="11" height="11" viewBox="0 0 11 11"><path d="M1 1l9 9M10 1l-9 9" stroke="#fff" strokeWidth="2.2" /></svg>
        </WinBtn>
      </WinControls>
    </TitleBar>

    <MenuBar>
      {menus.map(m => <span key={m}>{m}</span>)}
    </MenuBar>

    <Toolbar>
      {toolSlots.map(([w, icon], i) => <ToolSlot key={i} $w={w}>{icon}</ToolSlot>)}
      <DisabledSelect><Caret $light /></DisabledSelect>
      {toolSlotsAfter.map(([w, icon], i) => <ToolSlot key={i} $w={w}>{icon}</ToolSlot>)}
      <ShowMe><ShowMeIcon />Show Me</ShowMe>
    </Toolbar>

    <Workspace>
      <Side>
        <SideTabs>
          <SideTab $active>Dashboard</SideTab>
          <SideTab>
            Layout
            <Collapse>
              <svg width="8" height="12" viewBox="0 0 8 12" fill="none" stroke="#777" strokeWidth="1.2"><path d="M6 2 2 6l4 4" /></svg>
            </Collapse>
          </SideTab>
        </SideTabs>
        <Section $h={110} $top={12}>
          <DeviceRow $selected $indent={15}>Default</DeviceRow>
          <DeviceRow $indent={25}>Phone</DeviceRow>
          <Btn>Device Preview</Btn>
        </Section>
        <Section $h={76} $top={2}>
          <SideHeading>Size</SideHeading>
          <SizeSelect>
            min 420x560 - max 650x860
            <Caret />
          </SizeSelect>
        </Section>
        <SheetList>
          <SheetsHeading>Sheets</SheetsHeading>
          {sheets.map(s => (
            <SheetRow key={s}><SheetIcon />{s}</SheetRow>
          ))}
        </SheetList>
        <ObjectsPanel>
          <SideHeading>Objects</SideHeading>
          <ObjectGrid>
            {objects.map(o => (
              <ObjectItem key={o}>
                <ObjectIcon>{objectIcons[o]}</ObjectIcon>
                {o}
              </ObjectItem>
            ))}
          </ObjectGrid>
          <Toggle>
            <ToggleBtn $on>Tiled</ToggleBtn>
            <ToggleBtn>Floating</ToggleBtn>
          </Toggle>
          <CheckRow><CheckBox />Show dashboard title</CheckRow>
        </ObjectsPanel>
      </Side>

      <Canvas>
        <Dashboard>
          <Sheet $pad={16}>
            <SheetTitle>Diabetic\Non<br />Diabetic</SheetTitle>
            <PieChart />
          </Sheet>
          <Sheet $pad={5}>
            <SheetTitle>Blood Pressure<br />Report</SheetTitle>
            <BubbleChart />
          </Sheet>
          <Legends>
            <LegendHeading>Diabetes or not</LegendHeading>
            <LegendRow><Swatch $c="#e2575a" />Diabetic</LegendRow>
            <LegendRow><Swatch $c="#78b5b0" />Non Diabetic</LegendRow>
            <LegendHeading $gap={9}>BMI</LegendHeading>
            <Ramp $colors="#f0eeeb, #f6b497 45%, #ff5a00" />
            <RampLabels><span>0.00</span><span>67.10</span></RampLabels>
            <LegendHeading $gap={9}>Age (bin)</LegendHeading>
            {ageLegend.map(([label, c]) => (
              <LegendRow key={label}><Swatch $c={c} />{label}</LegendRow>
            ))}
            <LegendHeading $gap={8}>Measure Values</LegendHeading>
            <Ramp $colors="#f0f0f0, #000" />
            <RampLabels><span>0.0</span><span>142.4</span></RampLabels>
          </Legends>
          <Sheet $pad={16}>
            <SheetTitle>BMI Related to<br />Age</SheetTitle>
            <BarChart />
          </Sheet>
          <Sheet $pad={5}>
            <SheetTitle>Corelation<br />Analysis with<br />Heatmap</SheetTitle>
            <Heatmap />
          </Sheet>
        </Dashboard>
      </Canvas>
    </Workspace>

    <TabBar>
      <SheetTab $w={163} $pad={12}>
        <svg width="8" height="13" viewBox="0 0 8 13" fill="none" stroke="#777" strokeWidth="1">
          <ellipse cx="4" cy="2.5" rx="3.4" ry="1.8" /><path d="M.6 2.5v8c0 2.4 6.8 2.4 6.8 0v-8" />
        </svg>
        Data Source
      </SheetTab>
      <SheetTab $w={177} $pad={7}>Diabetic\Non Diabetic</SheetTab>
      <SheetTab $w={151} $pad={6}>BMI Related to Age</SheetTab>
      <SheetTab $w={177} $pad={7}>Blood Pressure Report</SheetTab>
      <SheetTab $w={251} $pad={7}>Corelation Analysis with Heatmap</SheetTab>
      <SheetTab $w={241} $pad={8} $active>
        <svg width="11" height="11" viewBox="0 0 11 11" fill="none" stroke="#666" strokeWidth="1">
          <rect x=".5" y=".5" width="10" height="10" /><path d="M.5 5.5h10M5.5 .5v10" />
        </svg>
        Diabetes Analysis Dashboard
      </SheetTab>
      <SheetTab $w={33} $pad={9}><SmallAdd kind="sheet" /></SheetTab>
      <SheetTab $w={31} $pad={9}><SmallAdd kind="dash" /></SheetTab>
      <SheetTab $w={32} $pad={9}><SmallAdd kind="story" /></SheetTab>
    </TabBar>

    <StatusBar>
      <StatusCell $w={56} />
      <StatusCell $w={71}>
        {['M6 1v10M7 6l5-5v10z', 'M7 1 2 6l5 5z', 'M2 1l5 5-5 5z', 'M2 1l5 5-5 5zM8 1v10'].map(d => (
          <svg key={d} width="13" height="12" viewBox="0 0 13 12"><path d={d} fill="#c4c4c4" stroke="#c4c4c4" /></svg>
        ))}
      </StatusCell>
      <StatusCell $w={70}>
        <svg width="12" height="12" viewBox="0 0 12 12" fill="#bcbcbc">
          {[0, 4.4, 8.8].flatMap(y => [0, 4.4, 8.8].map(x => <rect key={`${x}${y}`} x={x} y={y} width="3.2" height="3.2" />))}
        </svg>
        <svg width="12" height="12" viewBox="0 0 12 12" fill="#bcbcbc">
          <rect width="12" height="7.5" /><rect y="9" width="3" height="3" /><rect x="4.5" y="9" width="3" height="3" /><rect x="9" y="9" width="3" height="3" />
        </svg>
        <svg width="12" height="12" viewBox="0 0 12 12"><rect width="12" height="12" fill="#666" /></svg>
      </StatusCell>
    </StatusBar>
  </Page>
)

export default App
